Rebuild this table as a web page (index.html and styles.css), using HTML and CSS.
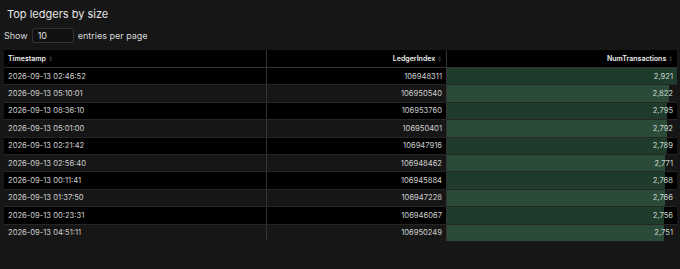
FILE: index.html
```html
<!DOCTYPE html>
<html>
<head>
<meta charset="utf-8">
<link rel="stylesheet" href="styles.css">
</head>
<body>
<div class="panel">
  <div class="title">Top ledgers by size</div>
  <div class="controls">
    <span>Show</span>
    <span class="input">10</span>
    <span>entries per page</span>
  </div>
  <table class="grid">
    <thead>
      <tr>
        <th class="c1">Timestamp <span class="sort">⇕</span></th>
        <th class="c2 num">LedgerIndex <span class="sort">⇕</span></th>
        <th class="c3 num">NumTransactions <span class="sort">⇕</span></th>
      </tr>
    </thead>
    <tbody id="rows"></tbody>
  </table>
</div>
<script>
var data = [
 ["2026-09-13 02:46:52","106948311",2921],
 ["2026-09-13 05:10:01","106950540",2822],
 ["2026-09-13 08:36:10","106953760",2795],
 ["2026-09-13 05:01:00","106950401",2792],
 ["2026-09-13 02:21:42","106947916",2789],
 ["2026-09-13 02:56:40","106948462",2771],
 ["2026-09-13 00:11:41","106945884",2768],
 ["2026-09-13 01:37:50","106947228",2766],
 ["2026-09-13 00:23:31","106946067",2756],
 ["2026-09-13 04:51:11","106950249",2751]
];
var max = 2921, html = "";
data.forEach(function(r){
  var pct = (r[2]/max*100).toFixed(2);
  html += '<tr><td class="c1">'+r[0]+'</td><td class="c2 num">'+r[1]+'</td>' +
    '<td class="c3 num"><div class="bar" style="width:'+pct+'%"></div><span class="val">'+r[2].toLocaleString('en-US')+'</span></td></tr>';
});
document.getElementById('rows').innerHTML = html;
</script>
</body>
</html>
```
FILE: styles.css
```css
html, body {
  margin: 0;
  padding: 0;
  background: #161616;
  color: #d4d4d4;
  font-family: Inter, "Noto Sans", sans-serif;
}
.panel {
  width: 680px;
  height: 269px;
  box-sizing: border-box;
  padding: 6px 3px 0 4px;
}
.title {
  font-size: 11px;
  color: #e6e6e6;
  padding-left: 3px;
  height: 16px;
  line-height: 16px;
}
.controls {
  display: flex;
  align-items: center;
  gap: 4px;
  font-size: 9px;
  color: #d8d8d8;
  height: 16px;
  margin-top: 5px;
  margin-bottom: 7px;
}
.input {
  box-sizing: border-box;
  width: 42px;
  height: 15px;
  border: 1px solid #333;
  border-radius: 2px;
  background: #111;
  padding-left: 5px;
  line-height: 13px;
  color: #e0e0e0;
}
.grid {
  width: 673px;
  border-collapse: collapse;
  table-layout: fixed;
  font-size: 7.6px;
}
.grid th {
  background: #000;
  color: #f0f0f0;
  font-weight: 600;
  font-size: 7px;
  height: 17px;
  padding: 0 4px;
  border-bottom: 1px solid #333;
  text-align: left;
}
.grid th.num, .grid td.num { text-align: right; }
.c1 { width: 254px; }
.c2 { width: 171px; border-left: 1px solid #333; }
.c3 { border-left: 1px solid #333; }
.sort {
  color: #555;
  font-size: 6px;
  font-weight: 400;
}
.grid td {
  height: 17.4px;
  padding: 0 4px;
  box-sizing: border-box;
  color: #d0d0d0;
  border-bottom: 1px solid #262626;
  white-space: nowrap;
}
.grid tbody tr:nth-child(odd) td { background: #000; }
.grid tbody tr:nth-child(even) td { background: #161616; }
.grid tbody tr:last-child td { border-bottom: none; }
.grid td.c3 {
  position: relative;
  padding: 0;
}
.bar {
  position: absolute;
  left: 0;
  top: 0;
  bottom: 0;
}
.grid tbody tr:nth-child(odd) .bar { background: #1f3b2b; }
.grid tbody tr:nth-child(even) .bar { background: #2b4a38; }
.val {
  position: relative;
  padding-right: 4px;
  color: #c8d8cc;
}
```
